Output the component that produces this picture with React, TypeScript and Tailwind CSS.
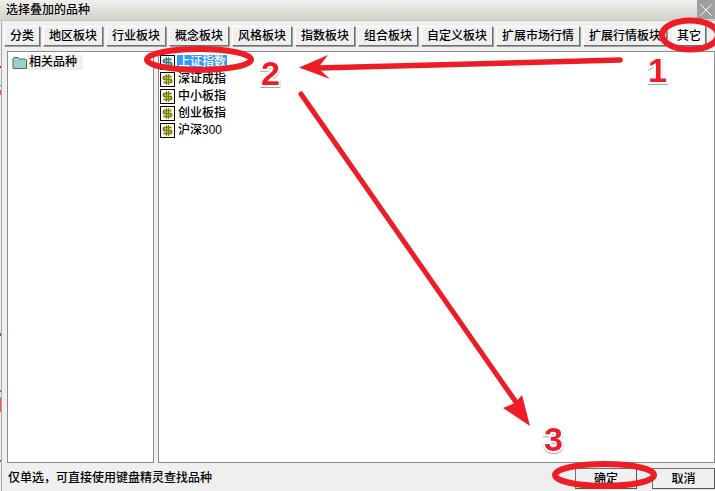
function Tab({ label, w, active }: { label: string; w: string; active?: boolean }) {
  return (
    <div className={`${w} h-[20px] shrink-0 flex items-center justify-center text-[12px] font-medium leading-none text-black border border-t-[#ffffff] border-l-[#ffffff] border-r-[#6f6f6f] border-b-[#6f6f6f] shadow-[1px_1px_0_#a0a0a0] ${active ? "bg-[#f7f7f7]" : "bg-[#efefef]"}`}>
      {label}
    </div>
  );
}

function Dollar({ selected }: { selected?: boolean }) {
  const c = selected ? "#3f7f7f" : "#808000";
  return (
    <div className="w-[15px] h-[15px] shrink-0 border border-black bg-white">
      <svg width="13" height="13" viewBox="0 0 13 13" fill="none" stroke={c} strokeWidth="2">
        <path d="M10.5 3.5H4Q2.5 3.5 2.5 5T4 6.5H9Q10.5 6.5 10.5 8T9 9.5H2.5" />
        <path d="M5.5 1V12M7.5 1V12" strokeWidth="1" />
      </svg>
    </div>
  );
}

function Row({ label, selected }: { label: string; selected?: boolean }) {
  return (
    <div className="h-[17px] flex items-center gap-[2px]">
      <Dollar selected={selected} />
      <span className={`text-[12px] font-medium leading-[15px] px-[1px] ${selected ? "bg-[#3399ff] text-white" : "text-black"}`}>{label}</span>
    </div>
  );
}

function Btn({ label, w }: { label: string; w: string }) {
  return (
    <div className={`${w} h-[21px] flex items-center justify-center text-[12px] font-medium leading-none text-black bg-[#f0f0f0] border border-[#6f6f6f] border-r-[#555555] border-b-[#555555]`}>
      {label}
    </div>
  );
}

const numberClass =
  "absolute text-[34px] font-bold leading-none font-['Liberation_Sans'] text-[#ee1c25] [-webkit-text-stroke:4px_#ffffff] [paint-order:stroke_fill] [filter:drop-shadow(0_1px_0_#a8a8a8)]";

export default function App() {
  return (
    <div className="relative w-[715px] h-[491px] overflow-hidden bg-[#efefef] font-['Liberation_Sans','Noto_Sans_CJK_SC',sans-serif]">
      <div className="h-[21px] flex bg-gradient-to-b from-[#f1f0ed] to-[#d4d1c8] border-b border-[#c8c5bb]">
        <div className="flex-1 pl-[6px] pt-[3px] text-[12px] font-medium leading-[14px] text-black [text-shadow:0_0_2px_#ffffff]">选择叠加的品种</div>
        <div className="w-[18px] h-[19px] bg-[#a0a0a0] flex items-center justify-center">
          <svg width="12" height="12" viewBox="0 0 12 12" fill="none" stroke="#ffffff" strokeWidth="1"><path d="M0.5 0.5 11.5 11.5M11.5 0.5 0.5 11.5" /></svg>
        </div>
      </div>
      <div className="h-[491px] border-l border-[#a8a8a8] ml-[1px]">
        <div className="flex gap-[3px] pl-[2px] pt-[5px] h-[30px]">
          <Tab label="分类" w="w-[36px]" />
          <Tab label="地区板块" w="w-[60px]" />
          <Tab label="行业板块" w="w-[60px]" />
          <Tab label="概念板块" w="w-[60px]" />
          <Tab label="风格板块" w="w-[60px]" />
          <Tab label="指数板块" w="w-[60px]" />
          <Tab label="组合板块" w="w-[60px]" />
          <Tab label="自定义板块" w="w-[72px]" />
          <Tab label="扩展市场行情" w="w-[84px]" />
          <Tab label="扩展行情板块" w="w-[84px]" />
          <div className="ml-[2px]"><Tab label="其它" w="w-[34px]" active /></div>
        </div>
        <div className="flex h-[412px] pl-[5px] gap-[4px]">
          <div className="w-[147px] bg-white border border-[#8c8c8c] pt-[2px] pl-[4px]">
            <div className="flex items-center h-[17px]">
              <svg width="15" height="14" viewBox="0 0 15 14" className="shrink-0">
                <path d="M1 3 2 1.5H6L7 3H13.5L14.5 4V12.5H1Z" fill="#9fcfc9" stroke="#3f6f78" />
              </svg>
              <span className="text-[12px] font-medium leading-[15px] pl-[2px] pr-[6px] bg-[#efefef] text-black">相关品种</span>
            </div>
          </div>
          <div className="flex-1 bg-white border border-[#8c8c8c] pt-[2px] pl-[1px]">
            <Row label="上证指数" selected />
            <Row label="深证成指" />
            <Row label="中小板指" />
            <Row label="创业板指" />
            <Row label="沪深300" />
          </div>
        </div>
        <div className="flex items-start h-[28px] pl-[6px] pt-[5px]">
          <div className="flex-1 text-[12px] font-medium leading-[16px] pt-[2px] text-black">仅单选，可直接使用键盘精灵查找品种</div>
          <Btn label="确定" w="w-[62px]" />
          <div className="ml-[15px]"><Btn label="取消" w="w-[63px]" /></div>
        </div>
      </div>

      <div className="absolute left-0 top-[66px] w-[1px] h-[2px] bg-[#c000c0]" />
      <div className="absolute left-0 top-[85px] w-[1px] h-[1px] bg-[#3080e0]" />
      <div className="absolute left-0 top-[90px] w-[1px] h-[5px] bg-[#ff5050]" />
      <div className="absolute left-0 top-[333px] w-[1px] h-[3px] bg-[#1080e0]" />
      <div className="absolute left-0 top-[390px] w-[1px] h-[2px] bg-[#3080e0]" />
      <div className="absolute left-0 top-[397px] w-[1px] h-[15px] bg-[#ff5050]" />
      <div className="absolute left-0 top-[460px] w-[1px] h-[2px] bg-[#1080e0]" />

      <svg className="absolute left-0 top-0 pointer-events-none" width="715" height="491" viewBox="0 0 715 491" fill="none">
        <ellipse cx="690" cy="35" rx="28" ry="14.5" stroke="#ee1c25" strokeWidth="6" />
        <ellipse cx="199" cy="59.5" rx="52" ry="10.5" stroke="#ee1c25" strokeWidth="6" />
        <ellipse cx="604.5" cy="475" rx="49.5" ry="11" stroke="#ee1c25" strokeWidth="6" />
        <path d="M620 60 318 68" stroke="#ee1c25" strokeWidth="5.5" strokeLinecap="round" />
        <path d="M299 67.5 328 55 318 68 330 79Z" fill="#ee1c25" />
        <path d="M301 94 518 405" stroke="#ee1c25" strokeWidth="5" strokeLinecap="round" />
        <path d="M530 426 503 408 515 403 522 395Z" fill="#ee1c25" />
      </svg>
      <div className={`${numberClass} left-[648px] top-[53px]`}>1</div>
      <div className={`${numberClass} left-[261px] top-[56px]`}>2</div>
      <div className={`${numberClass} left-[544px] top-[422px]`}>3</div>
    </div>
  );
}
